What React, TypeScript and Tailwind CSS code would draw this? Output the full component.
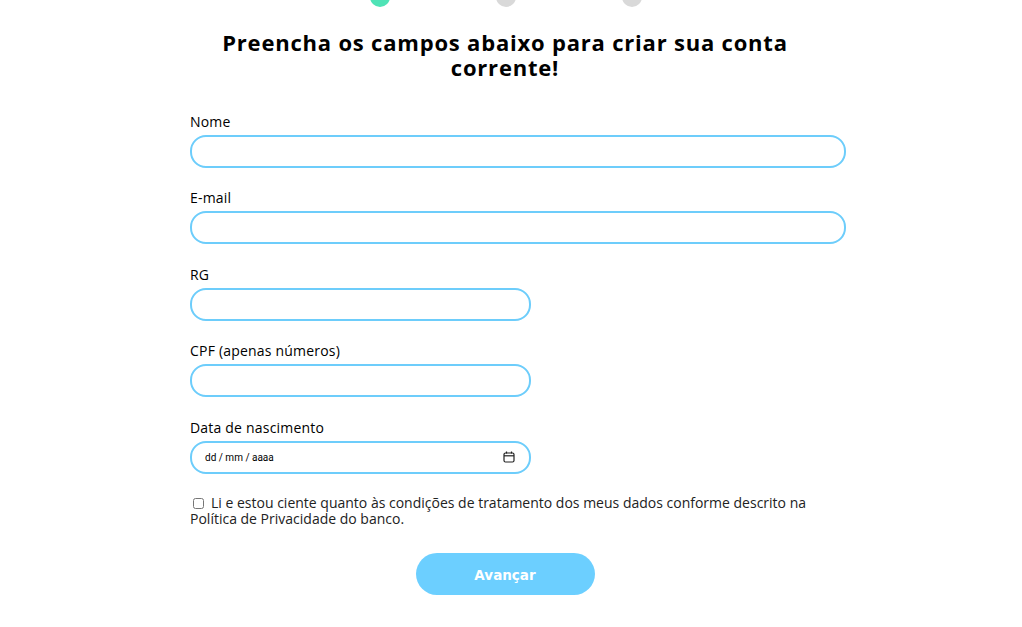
import React from 'react'

const labelCls = 'text-[14px] leading-[17px] tracking-[0.2px] text-black mt-[2px] mb-[5px]'

const Field = ({ label, wide }: { label: string; wide?: boolean }) => (
  <div className="flex flex-col">
    <label className={labelCls}>{label}</label>
    <input
      type="text"
      className={`${wide ? 'w-[656px]' : 'w-[341px]'} h-[33px] rounded-[16px] border-2 border-[#6dcdfb] px-3 outline-none`}
    />
  </div>
)

const App = () => {
  return (
    <div className="min-h-[627px] bg-white font-['Open_Sans',sans-serif] overflow-hidden">
      <div className="flex justify-center gap-[106px] -mt-[13px] ml-[-11px]">
        <span className="w-[20px] h-[20px] rounded-full bg-[#4fe3b6]" />
        <span className="w-[20px] h-[20px] rounded-full bg-[#d9d9d9]" />
        <span className="w-[20px] h-[20px] rounded-full bg-[#d9d9d9]" />
      </div>
      <div className="w-[630px] ml-[190px]">
        <h1 className="text-[22px] leading-[25px] tracking-[0.8px] font-bold text-center mt-[23px] px-[10px]">
          Preencha os campos abaixo para criar sua conta corrente!
        </h1>
        <form className="flex flex-col gap-[19.5px] mt-[30.5px]">
          <Field label="Nome" wide />
          <Field label="E-mail" wide />
          <Field label="RG" />
          <Field label="CPF (apenas números)" />
          <div className="flex flex-col">
            <label className={labelCls}>Data de nascimento</label>
            <div className="w-[341px] h-[33px] rounded-[16px] border-2 border-[#6dcdfb] pl-[13px] pr-[14px] flex items-center justify-between">
              <span className="text-[10px] font-['Roboto',sans-serif] text-black">dd / mm / aaaa</span>
              <svg width="12" height="12" viewBox="0 0 12 12" fill="none" stroke="#222" strokeWidth="1.2">
                <rect x="1" y="2" width="10" height="9" rx="1.5" />
                <line x1="1" y1="4.8" x2="11" y2="4.8" />
                <line x1="3.5" y1="0.5" x2="3.5" y2="2.5" />
                <line x1="8.5" y1="0.5" x2="8.5" y2="2.5" />
              </svg>
            </div>
          </div>
          <p className="text-[14px] leading-[16px] text-[#222] mt-[2px]">
            <input type="checkbox" className="w-[11px] h-[11px] ml-[3px] mr-[7px] align-[-1px]" />
            Li e estou ciente quanto às condições de tratamento dos meus dados conforme descrito na Política de Privacidade do banco.
          </p>
          <div className="flex justify-center mt-[6px]">
            <button type="button" className="w-[179px] h-[42px] rounded-full bg-[#6ccfff] text-white">
              <span className="font-['DejaVu_Sans'] font-bold text-[13.5px]">Avançar</span>
            </button>
          </div>
        </form>
      </div>
    </div>
  )
}

export default App
